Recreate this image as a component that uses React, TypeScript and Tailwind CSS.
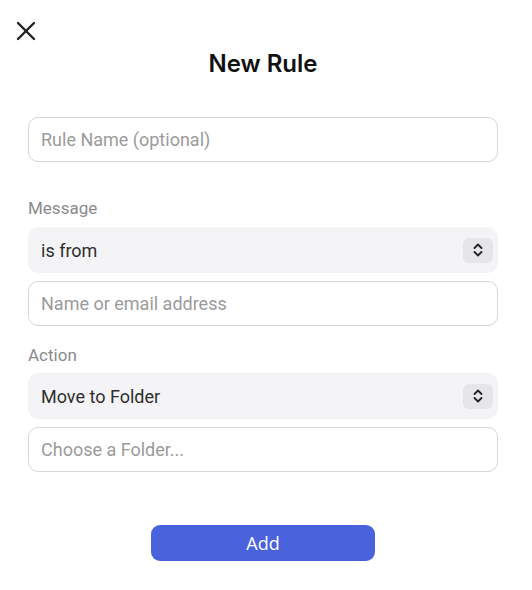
import React from 'react';

const Chevrons = () => (
  <span className="flex h-[25px] w-[30px] items-center justify-center rounded-[6px] bg-[#e5e5ea]">
    <svg width="12" height="16" viewBox="0 0 12 16" fill="none" stroke="#222" strokeWidth="1.8" strokeLinecap="round" strokeLinejoin="round">
      <path d="M2.5 6 L6 2.5 L9.5 6" />
      <path d="M2.5 10 L6 13.5 L9.5 10" />
    </svg>
  </span>
);

const TextField = ({ placeholder }: { placeholder: string }) => (
  <input
    placeholder={placeholder}
    className="block h-[45px] w-full rounded-[10px] border border-[#d6d6da] bg-white px-[12px] text-[18px] text-[#222] placeholder:text-[#9b9b9b] outline-none font-['Roboto',sans-serif]"
  />
);

const SelectField = ({ value }: { value: string }) => (
  <div className="flex h-[46px] w-full items-center justify-between rounded-[10px] bg-[#f4f4f6] pl-[13px] pr-[5px]">
    <span className="text-[18px] text-[#2e2e2e] font-['Roboto',sans-serif]">{value}</span>
    <Chevrons />
  </div>
);

export default function App() {
  return (
    <div className="h-[590px] w-[532px] bg-white font-['Roboto',sans-serif]">
      <div className="w-[526px]">
        <div className="pl-[15px] pt-[20px]">
          <button className="flex h-[22px] w-[22px] items-center justify-center">
            <svg width="22" height="22" viewBox="0 0 22 22" fill="none" stroke="#222" strokeWidth="2.4" strokeLinecap="round">
              <path d="M3 3 L19 19" />
              <path d="M19 3 L3 19" />
            </svg>
          </button>
        </div>

        <h1 className="mt-[6px] text-center text-[24px] leading-[32px] font-semibold text-[#111] font-['Inter',sans-serif]">
          New Rule
        </h1>

        <div className="px-[28px]">
          <div className="mt-[37px]">
            <TextField placeholder="Rule Name (optional)" />
          </div>

          <p className="mt-[34px] text-[17px] leading-[24px] text-[#8a8a8e]">Message</p>
          <div className="mt-[7px] flex flex-col gap-[8px]">
            <SelectField value="is from" />
            <TextField placeholder="Name or email address" />
          </div>

          <p className="mt-[17px] text-[17px] leading-[24px] text-[#8a8a8e]">Action</p>
          <div className="mt-[6px] flex flex-col gap-[8px]">
            <SelectField value="Move to Folder" />
            <TextField placeholder="Choose a Folder..." />
          </div>

          <div className="mt-[53px] flex justify-center">
            <button className="h-[36px] w-[224px] rounded-[9px] bg-[#4a63dc] text-[18px] text-white font-['Open_Sans',sans-serif]">
              Add
            </button>
          </div>
        </div>
      </div>
    </div>
  );
}
